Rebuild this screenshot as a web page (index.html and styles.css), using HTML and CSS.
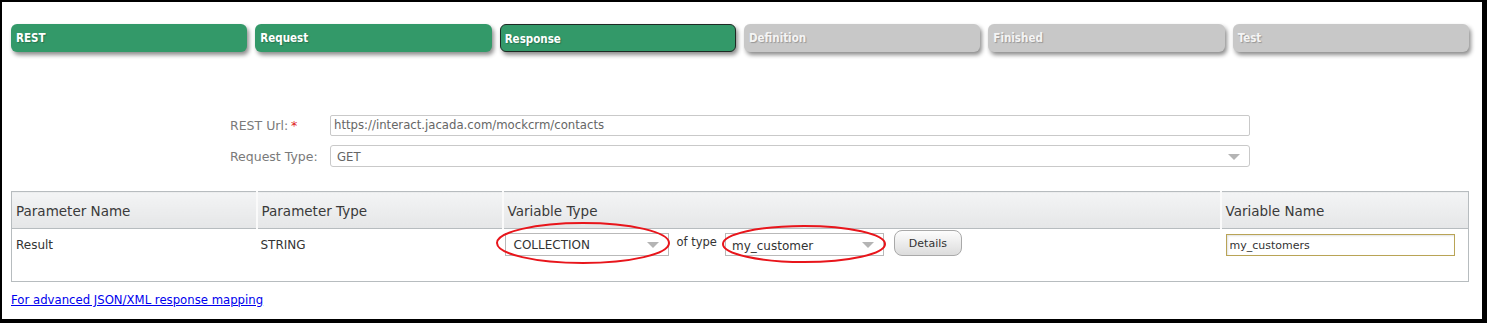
FILE: index.html
```html
<!DOCTYPE html>
<html lang="en">
<head>
    <meta charset="UTF-8">
    <meta name="viewport" content="width=device-width, initial-scale=1.0">
    <title>REST Service - Response</title>
    <link rel="stylesheet" href="styles.css">
</head>
<body>
    <div class="frame">
        <div class="steps">
            <div class="step done">REST</div>
            <div class="step done">Request</div>
            <div class="step done current">Response</div>
            <div class="step">Definition</div>
            <div class="step">Finished</div>
            <div class="step">Test</div>
        </div>

        <div class="rest-form">
            <div class="form-row">
                <label>REST Url:<span class="req">*</span></label>
                <div class="field">https://interact.jacada.com/mockcrm/contacts</div>
            </div>
            <div class="form-row">
                <label>Request Type:</label>
                <div class="field select">GET <span class="arrow"></span></div>
            </div>
        </div>

        <table class="params">
            <colgroup>
                <col class="c1">
                <col class="c2">
                <col class="c3">
                <col class="c4">
            </colgroup>
            <thead>
                <tr>
                    <th>Parameter Name</th>
                    <th>Parameter Type</th>
                    <th>Variable Type</th>
                    <th>Variable Name</th>
                </tr>
            </thead>
            <tbody>
                <tr>
                    <td><span class="cell-text">Result</span></td>
                    <td><span class="cell-text">STRING</span></td>
                    <td>
                        <div class="var-type">
                            <div class="combo coll">COLLECTION <span class="arrow"></span></div>
                            <span class="of-type">of type</span>
                            <div class="combo cust">my_customer <span class="arrow"></span></div>
                            <button class="details-btn">Details</button>
                        </div>
                    </td>
                    <td><div class="name-input">my_customers</div></td>
                </tr>
            </tbody>
        </table>

        <a class="advanced-link" href="#">For advanced JSON/XML response mapping</a>

        <!-- red annotation marks -->
        <svg class="marks" width="1480" height="317" viewBox="0 0 1480 317">
            <ellipse cx="581" cy="241" rx="86" ry="20" fill="none" stroke="#e8151b" stroke-width="2"/>
            <ellipse cx="802" cy="242" rx="81" ry="18" fill="none" stroke="#e8151b" stroke-width="2"/>
        </svg>
    </div>
</body>
</html>
```

FILE: styles.css
```css
body {
    margin: 0;
    font-family: "DejaVu Sans", sans-serif;
    background: #fff;
}
.frame {
    position: relative;
    width: 1480px;
    height: 317px;
    border-style: solid;
    border-color: #000;
    border-width: 2px 5px 4px 2px;
    background: #fff;
    overflow: hidden;
}
.steps {
    display: grid;
    grid-template-columns: repeat(6, 1fr);
    gap: 8px;
    width: 1458px;
    margin: 22px 0 0 9px;
}
.step {
    height: 28px;
    box-sizing: border-box;
    padding: 7px 5px 0;
    border-radius: 6px;
    background: #c8c8c8;
    color: #f4f4f4;
    font-family: "DejaVu Sans Condensed", "DejaVu Sans", sans-serif;
    font-size: 11.5px;
    font-weight: bold;
    text-shadow: 1px 1px 1px rgba(0,0,0,0.25);
    box-shadow: 2px 3px 4px rgba(0,0,0,0.45);
}
.step.done {
    background: #339969;
    color: #fff;
}
.step.current {
    border: 1px solid #1e2a24;
    padding: 7px 4px 0;
}
.rest-form {
    margin: 63px 0 0 228px;
}
.form-row {
    display: flex;
    align-items: center;
    margin-bottom: 9px;
}
.form-row label {
    width: 100px;
    font-size: 12.5px;
    color: #7a7a7a;
}
.req {
    color: #e02020;
    margin-left: 3px;
}
.field {
    position: relative;
    width: 920px;
    height: 21px;
    box-sizing: border-box;
    border: 1px solid #c9c9c9;
    border-radius: 2px;
    padding: 2px 3px 0;
    font-size: 11.7px;
    color: #666;
}
.field.select {
    height: 22px;
    padding: 4px 6px 0;
    border-radius: 3px;
}
.arrow {
    position: absolute;
    right: 9px;
    top: 8px;
    width: 0;
    height: 0;
    border-left: 6px solid transparent;
    border-right: 6px solid transparent;
    border-top: 6px solid #b4b4b4;
}
.params {
    margin: 24px 0 0 9px;
    width: 1457px;
    table-layout: fixed;
    border-collapse: collapse;
    border: 1px solid #b7bcbf;
    font-size: 12px;
    color: #333;
}
.params col.c1 { width: 245px; }
.params col.c2 { width: 246px; }
.params col.c3 { width: 718px; }
.params col.c4 { width: 248px; }
.params th {
    height: 35px;
    text-align: left;
    font-weight: normal;
    font-size: 13.5px;
    color: #3a3a3a;
    padding: 1px 4px 0;
    background: linear-gradient(#f3f4f5, #e5e6e7);
    border-bottom: 1px solid #b7bcbf;
    border-left: 2px solid #fafafa;
}
.params th:first-child { border-left: none; }
.params td {
    height: 52px;
    padding: 0 4px;
    vertical-align: top;
}
.cell-text {
    display: block;
    padding-top: 9px;
}
.var-type {
    display: flex;
    align-items: center;
    margin-top: 3px;
}
.combo {
    position: relative;
    box-sizing: border-box;
    height: 23px;
    border: 1px solid #b9b9b9;
    padding: 4px 8px 0;
    font-size: 12px;
    color: #333;
}
.combo .arrow { top: 8px; }
.combo.coll { width: 164px; margin-left: -2px; }
.combo.cust { width: 159px; padding: 5px 6px 0; }
.of-type {
    margin: -4px 8px 0 8px;
    font-size: 11.5px;
    color: #333;
}
.details-btn {
    margin: -2px 0 0 10px;
    width: 68px;
    height: 26px;
    border: 1px solid #a9a9a9;
    border-radius: 8px;
    background: linear-gradient(#fdfdfd, #dcdcdc);
    font-family: inherit;
    font-size: 11px;
    color: #333;
}
.name-input {
    box-sizing: border-box;
    width: 229px;
    height: 22px;
    margin: 5px 0 0 1px;
    border: 1px solid #b9a456;
    box-shadow: inset 1px 1px 2px rgba(0,0,0,0.12);
    padding: 4px 3px 0;
    font-size: 11px;
    color: #333;
}
.advanced-link {
    display: inline-block;
    margin: 11px 0 0 9px;
    font-size: 11.7px;
    color: #0000ee;
}
.marks {
    position: absolute;
    top: 0;
    left: 0;
    pointer-events: none;
}
```
